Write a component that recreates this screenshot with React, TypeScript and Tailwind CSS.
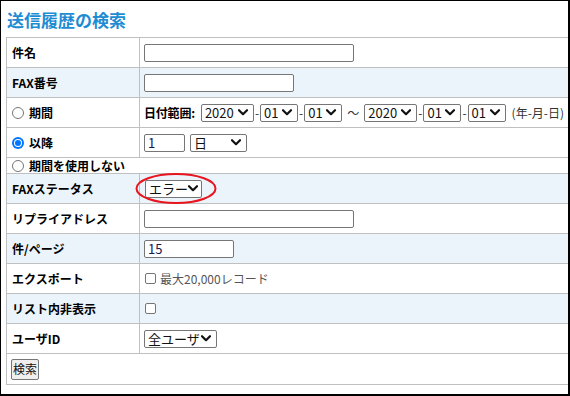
import React from 'react'

function Chevron() {
    return (
        <svg width="10" height="7" viewBox="0 0 10 7" className="shrink-0">
            <path d="M1 1.2 L5 5.2 L9 1.2" fill="none" stroke="#111" strokeWidth="2.2" strokeLinecap="round" strokeLinejoin="round"/>
        </svg>
    )
}

function Select({value, className}: {value: string, className: string}) {
    return (
        <div className={"inline-flex shrink-0 items-center justify-between whitespace-nowrap h-[18px] border border-[#767676] rounded-[2px] bg-white pl-[3px] pr-[5px] text-[13px] leading-none text-[#111] " + className}>
            <span>{value}</span>
            <Chevron/>
        </div>
    )
}

function TextInput({value, className}: {value?: string, className: string}) {
    return (
        <div className={"flex shrink-0 items-center h-[18px] border border-[#767676] rounded-[2px] bg-white px-[3px] text-[13px] leading-none text-[#1c1450] " + className}>
            {value}
        </div>
    )
}

function Radio({checked}: {checked?: boolean}) {
    if (checked) {
        return (
            <span className="inline-flex items-center justify-center w-[12px] h-[12px] rounded-full bg-[#0075ff] shrink-0">
                <span className="w-[8px] h-[8px] rounded-full bg-white flex items-center justify-center">
                    <span className="w-[6px] h-[6px] rounded-full bg-[#0075ff]"></span>
                </span>
            </span>
        )
    }
    return <span className="inline-block w-[12px] h-[12px] rounded-full border border-[#767676] bg-white shrink-0"></span>
}

function Checkbox() {
    return <span className="inline-block w-[11px] h-[11px] rounded-[2px] border border-[#767676] bg-white shrink-0"></span>
}

function Row({label, blue, children}: {label: React.ReactNode, blue?: boolean, children?: React.ReactNode}) {
    return (
        <tr className={blue ? "h-[30px] bg-[#ebf3fb]" : "h-[30px] bg-white"}>
            <td className="border border-[#c0c0c0] p-0 pl-[5px] font-bold text-[12px] leading-none whitespace-nowrap align-middle">{label}</td>
            <td className="border border-[#c0c0c0] p-0 pl-[4px] leading-none whitespace-nowrap align-middle">{children}</td>
        </tr>
    )
}

function Dash() {
    return <span className="mx-[1px] text-[12px] text-[#333]">-</span>
}

export default function App() {
    return (
        <div className="w-[570px] h-[396px] overflow-hidden bg-white border-t border-l border-black border-r-2 border-b-2 text-black"
             style={{fontFamily: '"Noto Sans CJK JP", "Noto Sans", sans-serif'}}>
            <div className="pl-[5px] pt-[6px]">
                <h1 className="h-[30px] pl-[1px] text-[17px] font-bold text-[#1e8cd3] leading-[26px]">送信履歴の検索</h1>
                <table className="w-[566px] table-fixed border-collapse">
                    <colgroup>
                        <col className="w-[133px]"/>
                        <col/>
                    </colgroup>
                    <tbody>
                    <Row label="件名"><TextInput className="w-[210px]"/></Row>
                    <Row label="FAX番号" blue><TextInput className="w-[150px]"/></Row>
                    <Row label={<span className="flex items-center gap-[5px]"><Radio/>期間</span>}>
                        <div className="flex items-center">
                            <span className="font-bold text-[12px] mr-[6px] tracking-[-0.2px]">日付範囲:</span>
                            <Select value="2020" className="w-[53px]"/>
                            <Dash/>
                            <Select value="01" className="w-[38px]"/>
                            <Dash/>
                            <Select value="01" className="w-[38px]"/>
                            <span className="mx-[5px] text-[12px] text-[#333]">～</span>
                            <Select value="2020" className="w-[53px]"/>
                            <Dash/>
                            <Select value="01" className="w-[38px]"/>
                            <Dash/>
                            <Select value="01" className="w-[38px]"/>
                            <span className="ml-[6px] text-[12px] text-[#333]">(年-月-日)</span>
                        </div>
                    </Row>
                    <Row label={<span className="flex items-center gap-[5px]"><Radio checked/>以降</span>}>
                        <div className="flex items-center gap-[5px]">
                            <TextInput value="1" className="w-[41px]"/>
                            <Select value="日" className="w-[57px]"/>
                        </div>
                    </Row>
                    <tr className="h-[16px] bg-white">
                        <td colSpan={2} className="border border-[#c0c0c0] p-0 pl-[5px] font-bold text-[12px] leading-none whitespace-nowrap">
                            <span className="flex items-center gap-[5px]"><Radio/>期間を使用しない</span>
                        </td>
                    </tr>
                    <Row label="FAXステータス" blue>
                        <div className="relative inline-flex items-center pl-[1px]">
                            <Select value="エラー" className="w-[57px] h-[17px]"/>
                            <svg className="absolute left-[-9px] top-[-8px]" width="82" height="33" viewBox="0 0 82 33">
                                <ellipse cx="41" cy="16.5" rx="39.5" ry="14.5" fill="none" stroke="#e8141e" strokeWidth="2"/>
                            </svg>
                        </div>
                    </Row>
                    <Row label="リプライアドレス"><TextInput className="w-[210px]"/></Row>
                    <Row label="件/ページ" blue><TextInput value="15" className="w-[90px]"/></Row>
                    <Row label="エクスポート">
                        <div className="flex items-center gap-[4px] pl-[1px] text-[12px] text-[#555]">
                            <Checkbox/>最大20,000レコード
                        </div>
                    </Row>
                    <Row label="リスト内非表示" blue>
                        <div className="flex items-center pl-[1px]"><Checkbox/></div>
                    </Row>
                    <Row label="ユーザID">
                        <Select value="全ユーザ" className="w-[73px] h-[17px]"/>
                    </Row>
                    <tr className="h-[31px] bg-white">
                        <td colSpan={2} className="border border-[#c0c0c0] p-0 pl-[4px] leading-none">
                            <button className="h-[21px] px-[1px] border border-[#767676] rounded-[2px] bg-[#efefef] text-[12px] leading-none text-[#111]">検索</button>
                        </td>
                    </tr>
                    </tbody>
                </table>
            </div>
        </div>
    )
}
